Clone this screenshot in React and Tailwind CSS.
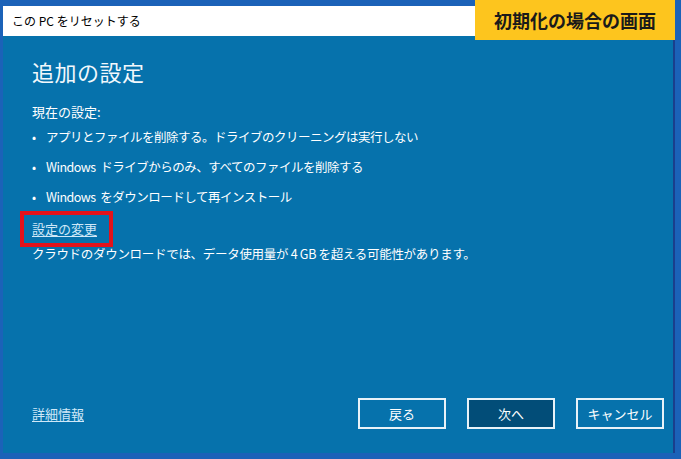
import React from "react";

const jp = { fontFamily: '"Noto Sans CJK JP", "Noto Sans", sans-serif' };

const Bullet = ({ children }) => (
  <li className="flex items-center h-[30px]">
    <span className="w-[14px] text-[12px]">•</span>
    <span>{children}</span>
  </li>
);

const Button = ({ label, primary }) => (
  <button
    className={`w-[88px] h-[31px] border-2 border-[#e8f2f8] text-[13px] text-white ${
      primary ? "bg-[#024d78]" : "bg-transparent"
    }`}
  >
    {label}
  </button>
);

export default function App() {
  return (
    <div
      style={jp}
      className="relative w-[681px] h-[459px] overflow-hidden bg-[#1b62b8] pt-[6px] pl-[3px] pr-[6px] pb-[6px]"
    >
      <div className="flex flex-col h-full border-r-2 border-[#1a3f8c]">
        <div className="h-[30px] bg-white flex items-center pl-[9px] text-[12px] text-black">
          この PC をリセットする
        </div>

        <div className="flex-1 bg-[#0672ac] flex flex-col pl-[29px] pr-[9px] pt-[20px] pb-[24px] text-white">
          <h1 className="text-[22px] leading-[30px] text-[#f2f8fc] tracking-[0.5px]">追加の設定</h1>

          <p className="mt-[17px] text-[13px] leading-[18px]">現在の設定:</p>
          <ul className="mt-[1px] text-[12.5px] tracking-[-0.5px]">
            <Bullet>アプリとファイルを削除する。ドライブのクリーニングは実行しない</Bullet>
            <Bullet>Windows&nbsp; ドライブからのみ、すべてのファイルを削除する</Bullet>
            <Bullet>Windows&nbsp; をダウンロードして再インストール</Bullet>
          </ul>

          <div className="-mt-[1px] -ml-[12px] w-[93px] h-[36px] border-[4px] border-[#e3121b] flex items-center pl-[8px]">
            <a className="text-[13px] text-[#cfe8f8] underline underline-offset-2">設定の変更</a>
          </div>

          <p className="-mt-[2px] text-[12.5px] tracking-[-0.3px]">
            クラウドのダウンロードでは、データ使用量が 4 GB を超える可能性があります。
          </p>

          <div className="mt-auto flex items-center">
            <a className="text-[13px] text-[#cfe8f8] underline underline-offset-2">詳細情報</a>
            <div className="ml-auto flex gap-[21px]">
              <Button label="戻る" />
              <Button label="次へ" primary />
              <Button label="キャンセル" />
            </div>
          </div>
        </div>
      </div>

      <div className="absolute top-0 right-[6px] w-[200px] h-[40px] bg-[#fdc51e] flex items-center justify-center text-[18px] font-bold text-[#1a1a1a]">
        初期化の場合の画面
      </div>
    </div>
  );
}
